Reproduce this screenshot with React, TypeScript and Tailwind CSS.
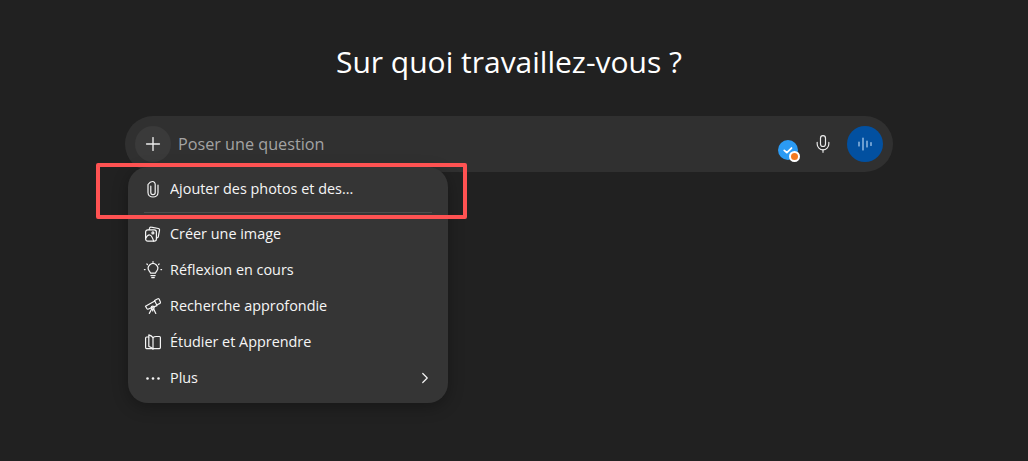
import { ChevronRight, Mic, Plus } from "lucide-react";
import type { ReactNode } from "react";

const iconClass = "w-[18px] h-[18px] shrink-0";

const ClipIcon = () => (
  <svg viewBox="0 0 18 18" fill="none" stroke="currentColor" strokeWidth="1.2" strokeLinecap="round" strokeLinejoin="round" className={iconClass}>
    <path d="M6.800 6v6.500c0 1.300.9 2.200 2.200 2.200s2.200-.9 2.200-2.200V4.400C11.200 2.700 10 1.500 8.500 1.500S5.400 2.500 4 4.500v8c0 2.600 2.200 4.500 5 4.500s5-1.900 5-4.500V5" />
  </svg>
);

const ImagesIcon = () => (
  <svg viewBox="0 0 18 18" fill="none" stroke="currentColor" strokeWidth="1.2" strokeLinecap="round" strokeLinejoin="round" className={iconClass}>
    <path d="M5.200 4.600 5.600 3.200c.2-.8.900-1.200 1.700-1l7 1.300c.9.200 1.400 1 1.200 1.800l-1.200 6.400c-.1.500-.4.900-.9 1.100" />
    <rect x="1.600" y="4.800" width="10.800" height="11.400" rx="2.200" />
    <circle cx="8.900" cy="7.900" r="1" />
    <path d="M1.800 13.200c1.300-2.600 3.200-3.700 4.600-3 1.500.7 2.300 3 3.200 5.900" />
  </svg>
);

const BulbIcon = () => (
  <svg viewBox="0 0 20 20" fill="none" stroke="currentColor" strokeWidth="1.2" strokeLinecap="round" strokeLinejoin="round" className="w-5 h-5 shrink-0 -mx-px">
    <path d="M7.500 13.200c-.2-1-.7-1.500-1.300-2.200a4.700 4.700 0 1 1 7.600 0c-.6.700-1.100 1.200-1.300 2.200z" />
    <path d="M7.900 15.600h4.200M8.700 17.600h2.600" />
    <path d="M10 1.600v.7M3.900 4l.5.5M16.100 4l-.5.500M1.400 9.600h.7M17.900 9.600h.7" />
  </svg>
);

const TelescopeIcon = () => (
  <svg viewBox="0 0 18 18" fill="none" stroke="currentColor" strokeWidth="1.2" strokeLinecap="round" strokeLinejoin="round" className={iconClass}>
    <path d="M1.500 9.200 10.800 4l2.200 4.600-8.600 3.400c-.7.300-1.300 0-1.600-.5z" />
    <path d="m10.600 3.600 3.200-1.800c.5-.3 1.100 0 1.400.5l1.200 2.700c.2.600 0 1.100-.5 1.400l-2.700 1.300" />
    <circle cx="8.700" cy="10.600" r="1.500" />
    <path d="m7.700 12-2.400 4.400M9.700 12l2.100 4.400M8.700 12.400v1.600" />
  </svg>
);

const BookIcon = () => (
  <svg viewBox="0 0 18 18" fill="none" stroke="currentColor" strokeWidth="1.2" strokeLinecap="round" strokeLinejoin="round" className={iconClass}>
    <path d="M9 4.600C8 3.200 6.600 2.200 4.800 1.800v11.600c1.800.5 3.200 1.500 4.200 2.800z" />
    <path d="M4.800 4H2.600c-.6 0-1 .4-1 1v9.600c0 .6.400 1 1 1H9" />
    <path d="M9 4.600c.8-.8 1.900-1.100 3.200-1.100h3.200c.6 0 1 .4 1 1v10.100c0 .6-.4 1-1 1H9" />
  </svg>
);

const DotsIcon = () => (
  <svg viewBox="0 0 18 18" fill="currentColor" className={iconClass}>
    <circle cx="3.500" cy="9.500" r="1.300" />
    <circle cx="9" cy="9.500" r="1.300" />
    <circle cx="14.500" cy="9.500" r="1.300" />
  </svg>
);

const MenuRow = ({ icon, label, trailing }: { icon: ReactNode; label: string; trailing?: ReactNode }) => (
  <div className="flex items-center gap-2 h-9 px-4 text-[14.4px] font-medium text-[#f5f5f5]">
    {icon}
    <span className="flex-1 truncate">{label}</span>
    {trailing}
  </div>
);

const App = () => {
  return (
    <div className="min-h-[461px] h-screen overflow-hidden bg-[#212121] pt-[40px] font-['Segoe_UI','Open_Sans','Noto_Sans',sans-serif]">
      <div className="ml-[125px] w-[768px]">
        <h1 className="text-center text-[30px] leading-[44px] text-white">Sur quoi travaillez-vous ?</h1>

        <div className="relative mt-[32px]">
          {/* composer */}
          <div className="flex items-center h-14 rounded-full bg-[#303030] pl-2.5 pr-2.5">
            <div className="flex items-center justify-center w-9 h-9 rounded-full bg-[#3a3a3a] text-[#ececec]">
              <Plus className="w-[22px] h-[22px]" strokeWidth={1.5} />
            </div>
            <span className="ml-[7px] flex-1 text-[16.2px] text-[#a3a3a3]">Poser une question</span>

            <div className="relative mt-3 w-5 h-5 rounded-full bg-[#2b9bf4] flex items-center justify-center">
              <svg viewBox="0 0 12 12" className="w-[14px] h-[14px]" fill="none" stroke="white" strokeWidth="1.500" strokeLinecap="round" strokeLinejoin="round">
                <path d="m2.800 6.300 2.200 2 4-4" />
              </svg>
              <span className="absolute -right-[2px] -bottom-[2px] w-[11px] h-[11px] rounded-full bg-[#f47a1f] border-2 border-white" />
            </div>
            <Mic className="ml-[15px] w-[20px] h-[20px] mb-[1px] text-[#ececec]" strokeWidth={1.4} />
            <div className="ml-[14px] flex items-center justify-center w-9 h-9 rounded-full bg-[#0250a0]">
              <svg viewBox="0 0 14 14" className="w-[14px] h-[14px]" fill="none" stroke="#b5d3f0" strokeWidth="1.200" strokeLinecap="round">
                <path d="M1 5v4M5 1v12M9 4v6M13 5.500v3" />
              </svg>
            </div>
          </div>

          {/* dropdown menu */}
          <div className="absolute left-[3px] top-[51px] w-[320px] h-[236px] rounded-[20px] bg-[#353535] pt-[4px] shadow-[0_4px_16px_rgba(0,0,0,0.3)]">
            <MenuRow icon={<ClipIcon />} label="Ajouter des photos et des..." />
            <div className="mx-4 mt-[5px] mb-[3px] border-t border-[#4d4d4d]" />
            <MenuRow icon={<ImagesIcon />} label="Créer une image" />
            <MenuRow icon={<BulbIcon />} label="Réflexion en cours" />
            <MenuRow icon={<TelescopeIcon />} label="Recherche approfondie" />
            <MenuRow icon={<BookIcon />} label="Étudier et Apprendre" />
            <MenuRow
              icon={<DotsIcon />}
              label="Plus"
              trailing={<ChevronRight className="w-[18px] h-[18px] -mr-[2px]" strokeWidth={1.6} />}
            />
          </div>

          {/* red highlight drawn over the screenshot */}
          <div className="absolute -left-[29px] top-[47px] w-[371px] h-[56px] border-[4px] border-[#ff5252] rounded-[2px]" />
        </div>
      </div>
    </div>
  );
};

export default App;
